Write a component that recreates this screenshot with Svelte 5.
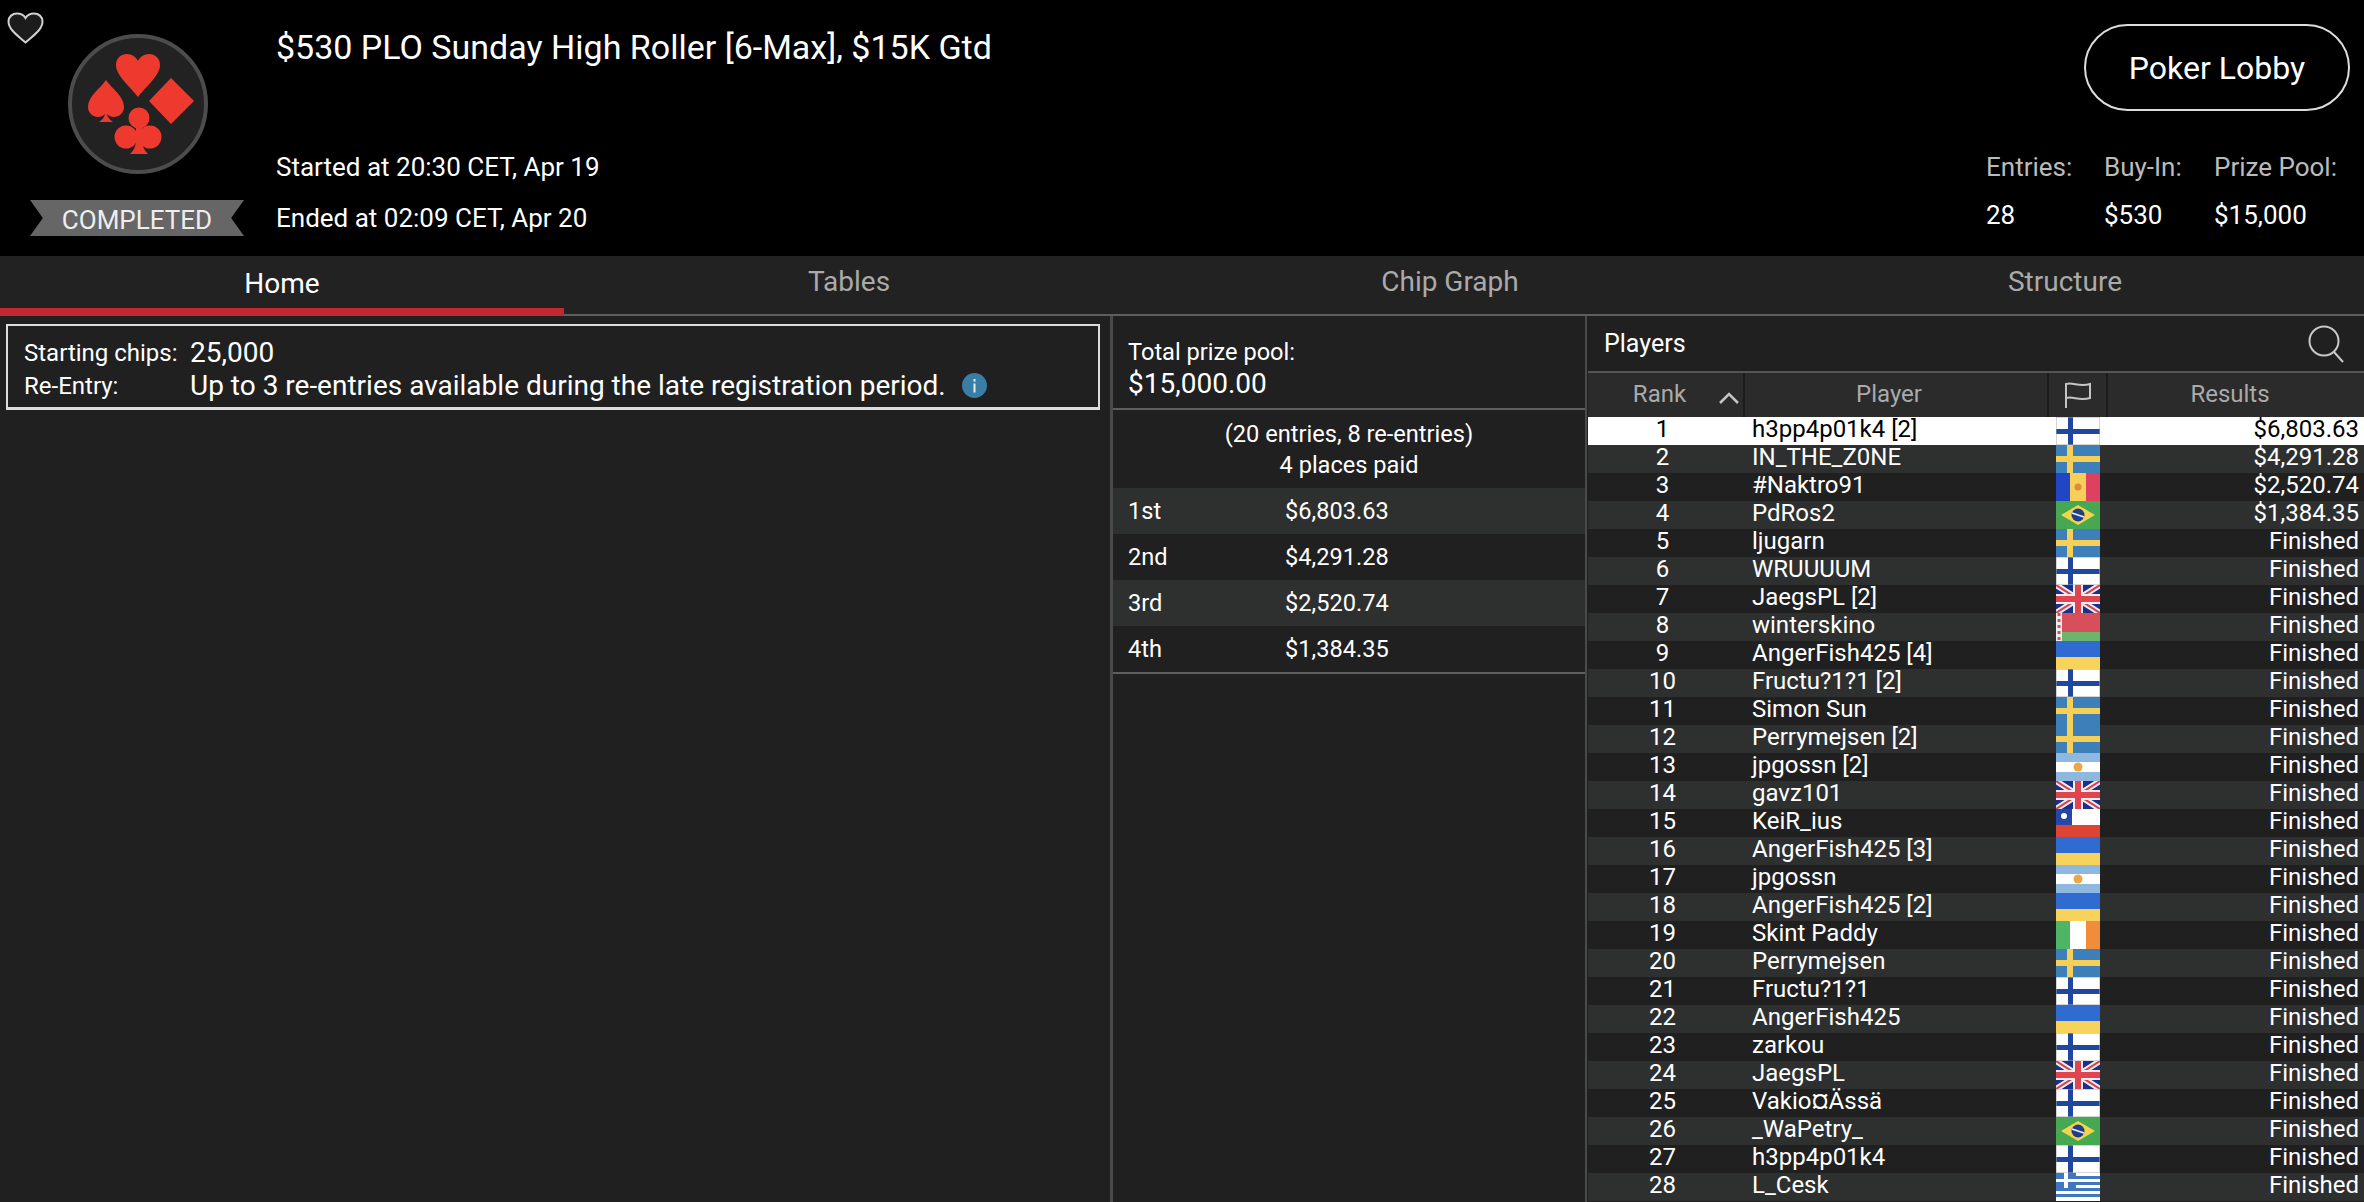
<script lang="ts">
  // rank is the row index + 1
  const players = [
    ['h3pp4p01k4 [2]', 'fi', '$6,803.63'],
    ['IN_THE_Z0NE', 'se', '$4,291.28'],
    ['#Naktro91', 'md', '$2,520.74'],
    ['PdRos2', 'br', '$1,384.35'],
    ['ljugarn', 'se', 'Finished'],
    ['WRUUUUM', 'fi', 'Finished'],
    ['JaegsPL [2]', 'gb', 'Finished'],
    ['winterskino', 'by', 'Finished'],
    ['AngerFish425 [4]', 'ua', 'Finished'],
    ['Fructu?1?1 [2]', 'fi', 'Finished'],
    ['Simon Sun', 'se', 'Finished'],
    ['Perrymejsen [2]', 'se', 'Finished'],
    ['jpgossn [2]', 'ar', 'Finished'],
    ['gavz101', 'gb', 'Finished'],
    ['KeiR_ius', 'cl', 'Finished'],
    ['AngerFish425 [3]', 'ua', 'Finished'],
    ['jpgossn', 'ar', 'Finished'],
    ['AngerFish425 [2]', 'ua', 'Finished'],
    ['Skint Paddy', 'ie', 'Finished'],
    ['Perrymejsen', 'se', 'Finished'],
    ['Fructu?1?1', 'fi', 'Finished'],
    ['AngerFish425', 'ua', 'Finished'],
    ['zarkou', 'fi', 'Finished'],
    ['JaegsPL', 'gb', 'Finished'],
    ['Vakio¤Ässä', 'fi', 'Finished'],
    ['_WaPetry_', 'br', 'Finished'],
    ['h3pp4p01k4', 'fi', 'Finished'],
    ['L_Cesk', 'gr', 'Finished'],
  ];

  const payouts = [
    ['1st', '$6,803.63'],
    ['2nd', '$4,291.28'],
    ['3rd', '$2,520.74'],
    ['4th', '$1,384.35'],
  ];

  const tabs = ['Home', 'Tables', 'Chip Graph', 'Structure'];
</script>

<div class="page">
  <header class="top">
    <svg class="heart" viewBox="0 0 37 32" width="37" height="32">
      <path d="M18.5 30.5C12 24.5 1.5 18 1.5 9.5C1.5 4.5 5.5 1.5 10 1.5C13.5 1.5 16.8 3.2 18.5 6C20.2 3.2 23.5 1.5 27 1.5C31.5 1.5 35.5 4.5 35.5 9.5C35.5 18 25 24.5 18.5 30.5Z" fill="#1c1c1c" stroke="#d0d0d0" stroke-width="2" />
    </svg>

    <div class="brand">
      <svg class="logo" viewBox="0 0 140 140" width="140" height="140">
        <circle cx="70" cy="70" r="68" fill="#222" stroke="#4c4c4c" stroke-width="4" />
        <!-- heart -->
        <path d="M70 63C62 52 48 42 48 31C48 24 53 20 59 20C64 20 68 23 70 27C72 23 76 20 81 20C87 20 92 24 92 31C92 42 78 52 70 63Z" fill="#ee3a2e" />
        <!-- spade -->
        <path d="M38 46C32 55 20 62 20 73C20 79 25 83 30 83C33 83 35 82 37 80C36 84 34 86 31 88L45 88C42 86 40 84 39 80C41 82 43 83 46 83C51 83 56 79 56 73C56 62 44 55 38 46Z" fill="#ee3a2e" />
        <!-- diamond -->
        <path d="M103 44L126 67L103 90L81 67Z" fill="#ee3a2e" />
        <!-- club -->
        <circle cx="71" cy="84" r="10.5" fill="#ee3a2e" />
        <circle cx="58" cy="103" r="11.5" fill="#ee3a2e" />
        <circle cx="82" cy="103" r="11.5" fill="#ee3a2e" />
        <path d="M68 90L74 90L74 108C75 114 77 117 80 120L62 120C65 117 67 114 68 108Z" fill="#ee3a2e" />
      </svg>
      <div class="ribbon">COMPLETED</div>
    </div>

    <div class="info">
      <h1>$530 PLO Sunday High Roller [6-Max], $15K Gtd</h1>
      <div class="dates">
        <div>Started at 20:30 CET, Apr 19</div>
        <div>Ended at 02:09 CET, Apr 20</div>
      </div>
    </div>

    <div class="side">
      <button class="lobby">Poker Lobby</button>
      <div class="stats">
        <div class="stat entries"><span>Entries:</span><b>28</b></div>
        <div class="stat buyin"><span>Buy-In:</span><b>$530</b></div>
        <div class="stat pool"><span>Prize Pool:</span><b>$15,000</b></div>
      </div>
    </div>
  </header>

  <nav class="tabs">
    {#each tabs as t, i}
      <div class="tab" class:active={i === 0}>{t}</div>
    {/each}
  </nav>

  <main class="body">
    <section class="home">
      <div class="notice">
        <div class="line">
          <span class="key">Starting chips:</span>
          <span class="val">25,000</span>
        </div>
        <div class="line">
          <span class="key">Re-Entry:</span>
          <span class="val">Up to 3 re-entries available during the late registration period.</span>
          <svg class="i" viewBox="0 0 25 25" width="25" height="25">
            <circle cx="12.5" cy="12.5" r="12.5" fill="#3a7ea6" />
            <rect x="11.5" y="6" width="2" height="2.5" fill="#e8eef2" />
            <rect x="11.5" y="10.5" width="2" height="9" fill="#e8eef2" />
          </svg>
        </div>
      </div>
    </section>

    <section class="prizes">
      <div class="total">
        <div class="total-label">Total prize pool:</div>
        <div class="total-val">$15,000.00</div>
      </div>
      <div class="entries-note">
        <div>(20 entries, 8 re-entries)</div>
        <div>4 places paid</div>
      </div>
      <div class="payouts">
        {#each payouts as p}
          <div class="payout"><span class="place">{p[0]}</span><span>{p[1]}</span></div>
        {/each}
      </div>
    </section>

    <section class="players">
      <div class="players-head">
        <span>Players</span>
        <svg viewBox="0 0 36 38" width="36" height="38">
          <circle cx="16" cy="16" r="14.5" fill="none" stroke="#c8c8c8" stroke-width="2" />
          <path d="M26 27L35 37" stroke="#c8c8c8" stroke-width="2" fill="none" />
        </svg>
      </div>
      <div class="cols">
        <div class="col rank-col">
          Rank
          <svg class="sort" viewBox="0 0 20 12" width="20" height="12">
            <path d="M1 11L10 2L19 11" fill="none" stroke="#c4c4c4" stroke-width="2.5" />
          </svg>
        </div>
        <div class="col player-col">Player</div>
        <div class="col flag-col">
          <svg viewBox="0 0 28 26" width="28" height="26">
            <path d="M2 26L2 2C9 0 15 5 26 2L26 16C15 19 9 14 2 16" fill="none" stroke="#c4c4c4" stroke-width="2" />
          </svg>
        </div>
        <div class="col results-col">Results</div>
      </div>
      <div class="rows">
        {#each players as p, i}
          <div class="row" class:selected={i === 0}>
            <span class="rank">{i + 1}</span>
            <span class="name">{p[0]}</span>
            <svg class="flag" viewBox="0 0 44 28" width="44" height="28" preserveAspectRatio="none">
              {#if p[1] === 'fi'}
                <rect width="44" height="28" fill="#fff" />
                <rect x="12" width="5" height="28" fill="#1f47a0" />
                <rect y="12" width="44" height="5" fill="#1f47a0" />
                <rect width="44" height="28" fill="none" stroke="#aaa" stroke-width="1" />
              {:else if p[1] === 'se'}
                <rect width="44" height="28" fill="#3d7fb8" />
                <rect x="11" width="6" height="28" fill="#f5cf58" />
                <rect y="11" width="44" height="6" fill="#f5cf58" />
              {:else if p[1] === 'md'}
                <rect width="14" height="28" fill="#2146c4" />
                <rect x="14" width="16" height="28" fill="#f6cf58" />
                <rect x="30" width="14" height="28" fill="#dd4060" />
                <circle cx="22" cy="14" r="3.5" fill="#e08a3c" />
              {:else if p[1] === 'br'}
                <rect width="44" height="28" fill="#46a850" />
                <path d="M22 4L39 14L22 24L5 14Z" fill="#f3d450" />
                <circle cx="22" cy="14" r="6.5" fill="#1f3f8c" />
                <path d="M16 12L28 16" stroke="#eee" stroke-width="1.5" />
              {:else if p[1] === 'gb'}
                <rect width="44" height="28" fill="#1d2f8c" />
                <path d="M0 0L44 28M44 0L0 28" stroke="#eee" stroke-width="6" />
                <path d="M0 0L44 28M44 0L0 28" stroke="#d8404e" stroke-width="2" />
                <rect x="17" width="10" height="28" fill="#eee" />
                <rect y="9" width="44" height="10" fill="#eee" />
                <rect x="19" width="6" height="28" fill="#e0454f" />
                <rect y="11" width="44" height="6" fill="#e0454f" />
              {:else if p[1] === 'by'}
                <rect width="44" height="19" fill="#d84f5c" />
                <rect y="19" width="44" height="9" fill="#6cb56a" />
                <rect width="6" height="28" fill="#eee" />
                <path d="M3 0L3 28" stroke="#d84f5c" stroke-width="3" stroke-dasharray="3 3" />
              {:else if p[1] === 'ua'}
                <rect width="44" height="16" fill="#2f6bd0" />
                <rect y="16" width="44" height="12" fill="#f8d35c" />
              {:else if p[1] === 'ar'}
                <rect width="44" height="28" fill="#fff" />
                <rect width="44" height="9" fill="#8fb8e0" />
                <rect y="19" width="44" height="9" fill="#8fb8e0" />
                <circle cx="22" cy="14" r="4.5" fill="#e8a848" />
              {:else if p[1] === 'cl'}
                <rect width="44" height="16" fill="#fff" />
                <rect y="16" width="44" height="12" fill="#dd4433" />
                <rect width="16" height="16" fill="#2447a8" />
                <circle cx="8" cy="7" r="3" fill="#fff" />
              {:else if p[1] === 'ie'}
                <rect width="14" height="28" fill="#4fb566" />
                <rect x="14" width="16" height="28" fill="#fff" />
                <rect x="30" width="14" height="28" fill="#f08c3a" />
              {:else if p[1] === 'gr'}
                <rect width="44" height="28" fill="#fff" />
                <rect y="3" width="44" height="3" fill="#3f78c0" />
                <rect y="9" width="44" height="3" fill="#3f78c0" />
                <rect y="15" width="44" height="3" fill="#3f78c0" />
                <rect y="21" width="44" height="3" fill="#3f78c0" />
                <rect width="20" height="15" fill="#3f78c0" />
                <rect x="8" width="4" height="15" fill="#fff" />
                <rect y="6" width="20" height="3" fill="#fff" />
              {/if}
            </svg>
            <span class="result">{p[2]}</span>
          </div>
        {/each}
      </div>
    </section>
  </main>
</div>

<style>
  :global(body) {
    margin: 0;
    background: #202020;
  }
  .page {
    width: 2364px;
    height: 1202px;
    overflow: hidden;
    font-family: Roboto, "Liberation Sans", sans-serif;
    color: #fff;
    display: flex;
    flex-direction: column;
  }

  /* header */
  .top {
    height: 256px;
    background: #000;
    display: flex;
    position: relative;
    flex: none;
  }
  .heart {
    position: absolute;
    left: 7px;
    top: 12px;
  }
  .brand {
    width: 276px;
    flex: none;
    display: flex;
    flex-direction: column;
    padding: 34px 0 0 30px;
    box-sizing: border-box;
  }
  .logo {
    margin-left: 38px;
    display: block;
  }
  .ribbon {
    margin-top: 26px;
    width: 214px;
    height: 36px;
    background: #666;
    clip-path: polygon(0 0, 100% 0, 94% 50%, 100% 100%, 0 100%, 6% 50%);
    text-align: center;
    font-size: 26px;
    line-height: 40px;
    color: #eee;
  }
  .info {
    flex: 1;
    display: flex;
    flex-direction: column;
  }
  h1 {
    margin: 27px 0 0;
    font-size: 34px;
    font-weight: 400;
    line-height: 40px;
  }
  .dates {
    margin-top: 84px;
    font-size: 26px;
    display: flex;
    flex-direction: column;
    gap: 19px;
    line-height: 32px;
  }
  .side {
    width: 400px;
    flex: none;
    position: relative;
    display: flex;
    flex-direction: column;
  }
  .lobby {
    margin: 24px 0 0 120px;
    width: 266px;
    height: 87px;
    box-sizing: border-box;
    background: #000;
    color: #fff;
    border: 2px solid #ddd;
    border-radius: 44px;
    font: 400 32px Roboto, sans-serif;
    padding: 0;
  }
  .stats {
    display: flex;
    margin: 40px 0 0 22px;
    font-size: 26px;
  }
  .stat {
    display: flex;
    flex-direction: column;
    gap: 16px;
    line-height: 32px;
  }
  .entries { width: 118px; }
  .buyin { width: 110px; }
  .stat span { color: #bbb; }
  .stat b { font-weight: 400; }

  /* tabs */
  .tabs {
    height: 60px;
    flex: none;
    background: #222;
    display: grid;
    grid-template-columns: 564px 570px 632px 598px;
    grid-template-rows: 60px;
  }
  .tab {
    font-size: 28px;
    color: #aaa;
    text-align: center;
    line-height: 52px;
    box-sizing: border-box;
    border-bottom: 2px solid #5e5e5e;
  }
  .tab.active {
    color: #fff;
    border-bottom: 8px solid #c4272d;
    padding-top: 4px;
    line-height: 48px;
  }

  /* body */
  .body {
    flex: 1;
    display: flex;
    background: #202020;
    min-height: 0;
  }
  .home {
    width: 1110px;
    flex: none;
    padding: 8px 10px 0 6px;
    box-sizing: border-box;
  }
  .notice {
    height: 86px;
    box-sizing: border-box;
    border: 2px solid #ddd;
    border-bottom-width: 3px;
    padding: 10px 0 0 16px;
  }
  .line {
    display: flex;
    align-items: center;
    height: 33px;
  }
  .key {
    width: 166px;
    flex: none;
    font-size: 24px;
  }
  .val {
    font-size: 28px;
  }
  .i {
    margin-left: 16px;
  }
  .prizes {
    width: 477px;
    flex: none;
    box-sizing: border-box;
    border-left: 3px solid #4a4a4a;
    border-right: 2px solid #4a4a4a;
    font-size: 23.6px;
  }
  .total {
    height: 94px;
    box-sizing: border-box;
    border-bottom: 2px solid #5e5e5e;
    padding: 21px 0 0 15px;
  }
  .total-label { line-height: 30px; }
  .total-val {
    font-size: 28px;
    line-height: 34px;
  }
  .entries-note {
    height: 78px;
    padding-top: 9px;
    box-sizing: border-box;
    text-align: center;
    line-height: 31px;
  }
  .payouts {
    border-bottom: 2px solid #5e5e5e;
  }
  .payout {
    height: 46px;
    display: flex;
    align-items: center;
    padding-left: 15px;
  }
  .payout:nth-child(odd) { background: #2e3030; }
  .place { width: 157px; }

  /* players table */
  .players {
    flex: 1;
    min-width: 0;
    display: flex;
    flex-direction: column;
    padding-left: 1px;
  }
  .players-head {
    height: 57px;
    flex: none;
    box-sizing: border-box;
    border-bottom: 2px solid #555;
    display: flex;
    align-items: center;
    justify-content: space-between;
    padding: 0 20px 0 16px;
    font-size: 25px;
  }
  .cols {
    height: 44px;
    flex: none;
    display: grid;
    grid-template-columns: 155px 304px 59px 1fr;
    background: #2b2b2b;
    color: #aaa;
    font-size: 24px;
    box-sizing: border-box;
  }
  .col {
    display: flex;
    align-items: center;
    justify-content: center;
    position: relative;
  }
  .col + .col { border-left: 2px solid #1c1c1c; }
  .rank-col { padding: 0 12px 2px 0; }
  .player-col { padding: 0 14px 2px 0; }
  .results-col { padding: 0 12px 2px 0; }
  .sort {
    position: absolute;
    right: 4px;
    top: 19px;
  }
  .rows {
    flex: 1;
    min-height: 0;
  }
  .row {
    height: 28px;
    display: grid;
    grid-template-columns: 155px 313px 44px 1fr;
    font-size: 24px;
    line-height: 25px;
    background: #202020;
  }
  .row:nth-child(even) { background: #2e3030; }
  .row.selected {
    background: #fff;
    color: #000;
  }
  .rank {
    text-align: center;
    padding-right: 6px;
  }
  .name { padding-left: 9px; }
  .flag { display: block; filter: blur(0.5px); }
  .result {
    text-align: right;
    padding-right: 5px;
  }
</style>
